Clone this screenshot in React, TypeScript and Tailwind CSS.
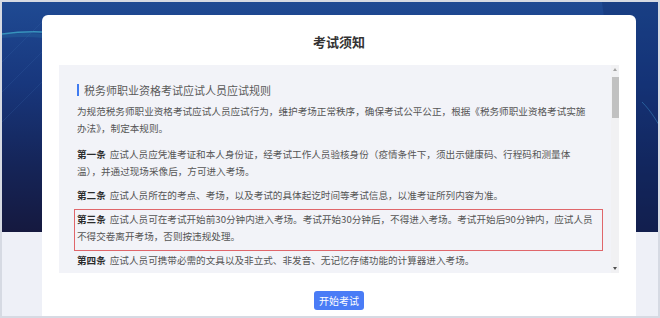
import React from 'react';

const font = { fontFamily: '"Noto Sans CJK SC", "Noto Sans", sans-serif' };

const Label: React.FC<{ children: React.ReactNode }> = ({ children }) => (
  <span className="mr-[4px] font-bold text-[#2b2b2b]">{children}</span>
);

const App: React.FC = () => {
  return (
    <div
      className="relative h-[318px] w-[660px] overflow-hidden border-2 border-[#d6dae3] bg-[#eef0f7]"
      style={font}
    >
      {/* dark banner behind the card */}
      <div className="absolute left-0 top-0 h-[230px] w-full bg-[linear-gradient(180deg,#1f4a93_0%,#18377d_35%,#152559_70%,#15193f_100%)]">
        <svg className="absolute left-0 top-0" width="660" height="230" viewBox="0 0 660 230">
          <path d="M0 32 C 40 26, 90 30, 150 60" stroke="#3fa7c9" strokeWidth="1.5" fill="none" opacity="0.8" />
          <path d="M0 34 C 40 30, 80 36, 130 62" stroke="#2c7fb0" strokeWidth="4" fill="none" opacity="0.25" />
          <path d="M0 60 L40 20 M0 90 L40 50 M0 120 L40 80" stroke="#3d6db0" strokeWidth="0.6" opacity="0.35" />
          <path d="M600 0 L660 0 L660 230 L630 230 Z" fill="#0f2a6a" opacity="0.35" />
          <path d="M640 100 C 650 110, 655 120, 660 128" stroke="#3b8fc8" strokeWidth="1" fill="none" opacity="0.5" />
        </svg>
      </div>

      <div className="relative ml-[40px] mt-[13px] w-[594px] rounded-[6px] bg-white">
        <div className="flex h-[50px] items-center justify-center pt-[4px] text-[13px] font-bold text-[#333]">
          考试须知
        </div>

        <div className="mx-[17px] flex h-[208px] overflow-hidden bg-[#f2f3f8]">
          <div className="flex-1 whitespace-nowrap pl-[15px] pr-[8px] pt-[17px] text-[9.6px] leading-[17px] text-[#555]">
            <div className="mb-[5px] flex h-[16px] items-center px-[3px]">
              <span className="mr-[5px] h-[12px] w-[2px] bg-[#3f7bf0]" />
              <span className="text-[11px] text-[#5a5a5a]">税务师职业资格考试应试人员应试规则</span>
            </div>
            <p className="mb-[9px] px-[3px]">
              为规范税务师职业资格考试应试人员应试行为，维护考场正常秩序，确保考试公平公正，根据《税务师职业资格考试实施
              <br />
              办法》，制定本规则。
            </p>
            <p className="mb-[7px] px-[3px]">
              <Label>第一条</Label>应试人员应凭准考证和本人身份证，经考试工作人员验核身份（疫情条件下，须出示健康码、行程码和测量体
              <br />
              温），并通过现场采像后，方可进入考场。
            </p>
            <p className="mb-[5px] px-[3px]">
              <Label>第二条</Label>应试人员所在的考点、考场，以及考试的具体起讫时间等考试信息，以准考证所列内容为准。
            </p>
            <p className="mb-[1px] border border-[#e0666b] px-[2px] pb-[5px] pt-[1px]">
              <Label>第三条</Label>应试人员可在考试开始前30分钟内进入考场。考试开始30分钟后，不得进入考场。考试开始后90分钟内，应试人员
              <br />
              不得交卷离开考场，否则按违规处理。
            </p>
            <p className="px-[3px]">
              <Label>第四条</Label>应试人员可携带必需的文具以及非立式、非发音、无记忆存储功能的计算器进入考场。
            </p>
          </div>

          {/* scrollbar */}
          <div className="flex w-[8px] flex-col items-center bg-[#f1f1f3]">
            <span className="mt-[3px] h-0 w-0 border-x-[2.5px] border-b-[3px] border-x-transparent border-b-[#a3a3a3]" />
            <span className="mt-[6px] h-[41px] w-[7px] bg-[#c1c1c1]" />
            <span className="flex-1" />
            <span className="mb-[3px] h-0 w-0 border-x-[2.5px] border-t-[3px] border-x-transparent border-t-[#505050]" />
          </div>
        </div>

        <div className="flex h-[60px] justify-center pt-[18px]">
          <button className="h-[19px] w-[50px] rounded-[3px] bg-[#4a7cf6] text-[10px] leading-[19px] text-white">
            开始考试
          </button>
        </div>
      </div>
    </div>
  );
};

export default App;
